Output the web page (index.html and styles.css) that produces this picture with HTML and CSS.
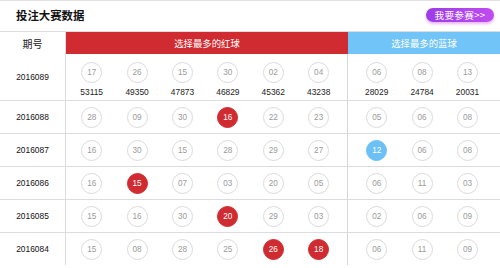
FILE: index.html
```html
<!DOCTYPE html>
<html lang="zh-CN">
<head>
<meta charset="utf-8">
<title>投注大赛数据</title>
<link rel="stylesheet" href="styles.css">
</head>
<body>
<div class="panel">
  <div class="top">
    <h1 class="title">投注大赛数据</h1>
    <a class="join">我要参赛&gt;&gt;</a>
  </div>
  <div class="row head">
    <div class="date">期号</div>
    <div class="red-h">选择最多的红球</div>
    <div class="blue-h">选择最多的蓝球</div>
  </div>
  <div class="row first">
    <div class="date">2016089</div>
    <div class="reds">
      <div class="cell"><span class="ball">17</span><span class="cnt">53115</span></div>
      <div class="cell"><span class="ball">26</span><span class="cnt">49350</span></div>
      <div class="cell"><span class="ball">15</span><span class="cnt">47873</span></div>
      <div class="cell"><span class="ball">30</span><span class="cnt">46829</span></div>
      <div class="cell"><span class="ball">02</span><span class="cnt">45362</span></div>
      <div class="cell"><span class="ball">04</span><span class="cnt">43238</span></div>
    </div>
    <div class="blues">
      <div class="cell"><span class="ball">06</span><span class="cnt">28029</span></div>
      <div class="cell"><span class="ball">08</span><span class="cnt">24784</span></div>
      <div class="cell"><span class="ball">13</span><span class="cnt">20031</span></div>
    </div>
  </div>
  <div class="row">
    <div class="date">2016088</div>
    <div class="reds">
      <div class="cell"><span class="ball">28</span></div>
      <div class="cell"><span class="ball">09</span></div>
      <div class="cell"><span class="ball">30</span></div>
      <div class="cell"><span class="ball hit-r">16</span></div>
      <div class="cell"><span class="ball">22</span></div>
      <div class="cell"><span class="ball">23</span></div>
    </div>
    <div class="blues">
      <div class="cell"><span class="ball">05</span></div>
      <div class="cell"><span class="ball">06</span></div>
      <div class="cell"><span class="ball">08</span></div>
    </div>
  </div>
  <div class="row">
    <div class="date">2016087</div>
    <div class="reds">
      <div class="cell"><span class="ball">16</span></div>
      <div class="cell"><span class="ball">30</span></div>
      <div class="cell"><span class="ball">15</span></div>
      <div class="cell"><span class="ball">28</span></div>
      <div class="cell"><span class="ball">29</span></div>
      <div class="cell"><span class="ball">27</span></div>
    </div>
    <div class="blues">
      <div class="cell"><span class="ball hit-b">12</span></div>
      <div class="cell"><span class="ball">06</span></div>
      <div class="cell"><span class="ball">08</span></div>
    </div>
  </div>
  <div class="row">
    <div class="date">2016086</div>
    <div class="reds">
      <div class="cell"><span class="ball">16</span></div>
      <div class="cell"><span class="ball hit-r">15</span></div>
      <div class="cell"><span class="ball">07</span></div>
      <div class="cell"><span class="ball">03</span></div>
      <div class="cell"><span class="ball">20</span></div>
      <div class="cell"><span class="ball">05</span></div>
    </div>
    <div class="blues">
      <div class="cell"><span class="ball">06</span></div>
      <div class="cell"><span class="ball">11</span></div>
      <div class="cell"><span class="ball">03</span></div>
    </div>
  </div>
  <div class="row">
    <div class="date">2016085</div>
    <div class="reds">
      <div class="cell"><span class="ball">15</span></div>
      <div class="cell"><span class="ball">16</span></div>
      <div class="cell"><span class="ball">30</span></div>
      <div class="cell"><span class="ball hit-r">20</span></div>
      <div class="cell"><span class="ball">29</span></div>
      <div class="cell"><span class="ball">03</span></div>
    </div>
    <div class="blues">
      <div class="cell"><span class="ball">02</span></div>
      <div class="cell"><span class="ball">06</span></div>
      <div class="cell"><span class="ball">09</span></div>
    </div>
  </div>
  <div class="row">
    <div class="date">2016084</div>
    <div class="reds">
      <div class="cell"><span class="ball">15</span></div>
      <div class="cell"><span class="ball">08</span></div>
      <div class="cell"><span class="ball">28</span></div>
      <div class="cell"><span class="ball">25</span></div>
      <div class="cell"><span class="ball hit-r">26</span></div>
      <div class="cell"><span class="ball hit-r">18</span></div>
    </div>
    <div class="blues">
      <div class="cell"><span class="ball">06</span></div>
      <div class="cell"><span class="ball">11</span></div>
      <div class="cell"><span class="ball">09</span></div>
    </div>
  </div>
</div>
</body>
</html>
```
FILE: styles.css
```css
html, body {
  margin: 0;
  padding: 0;
  background: #fff;
}
body {
  font-family: "Liberation Sans", "Noto Sans CJK SC", sans-serif;
  color: #222;
}
.panel {
  width: 500px;
  border-top: 1px solid #e2e2e2;
}
.top {
  height: 30px;
  display: flex;
  align-items: center;
  justify-content: space-between;
  padding: 0 6px 0 16px;
}
.title {
  margin: 0;
  font-family: "Noto Sans CJK SC", sans-serif;
  font-size: 11.4px;
  font-weight: bold;
  color: #111;
  line-height: 14px;
  margin-top: -3px;
}
.join {
  display: block;
  width: 68px;
  height: 14px;
  line-height: 14px;
  margin-top: -2px;
  border-radius: 8px;
  background: linear-gradient(to right, #9b3ce6, #c04cf0);
  box-shadow: 0 2px 3px rgba(215, 120, 235, 0.55);
  color: #fff;
  font-family: "Noto Sans CJK SC", sans-serif;
  font-size: 9.6px;
  letter-spacing: 0.3px;
  text-align: center;
}
.row {
  display: grid;
  grid-template-columns: 66px 282px 152px;
  height: 32px;
  border-top: 1px solid #dcdcdc;
}
.row.head {
  height: 22px;
}
.row.first {
  height: 46px;
  border-top: 0;
}
.head .date,
.head .red-h,
.head .blue-h {
  display: flex;
  align-items: center;
  justify-content: center;
  font-family: "Noto Sans CJK SC", sans-serif;
  font-size: 9.4px;
}
.head .date {
  font-size: 10px;
  color: #222;
}
.red-h {
  background: #cf2b30;
  color: #fff;
}
.blue-h {
  background: #70c4f7;
  color: #fff;
}
.date {
  border-right: 1px solid #dcdcdc;
  display: flex;
  align-items: center;
  justify-content: center;
  font-size: 8.4px;
  color: #111;
}
.reds {
  display: grid;
  grid-template-columns: repeat(6, 45.4px);
  padding-left: 3px;
  border-right: 1px solid #d6d6d6;
}
.blues {
  display: grid;
  grid-template-columns: repeat(3, 45.4px);
  padding-left: 6px;
}
.cell {
  display: flex;
  flex-direction: column;
  align-items: center;
  justify-content: center;
}
.first .cell {
  justify-content: flex-start;
  padding-top: 8px;
}
.ball {
  box-sizing: border-box;
  width: 21px;
  height: 21px;
  border: 1px solid #dadada;
  border-radius: 50%;
  display: flex;
  align-items: center;
  justify-content: center;
  font-size: 8.2px;
  color: #9a9a9a;
}
.ball.hit-r {
  background: #cf2b30;
  border-color: #cf2b30;
  color: #fff;
}
.ball.hit-b {
  background: #6cc0f5;
  border-color: #6cc0f5;
  color: #fff;
}
.cnt {
  margin-top: 4px;
  font-size: 8.4px;
  line-height: 10px;
  color: #222;
}
```
